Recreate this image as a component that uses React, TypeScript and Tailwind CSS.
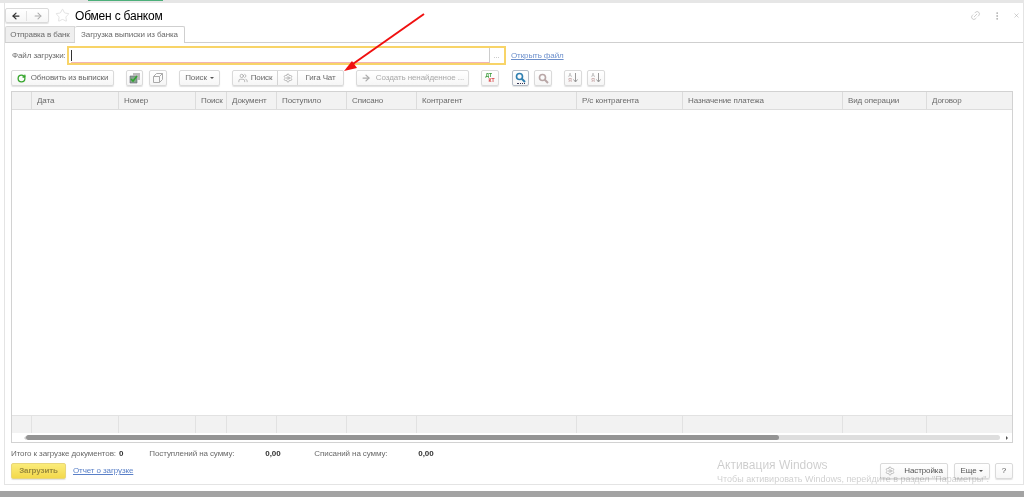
import React from 'react';
import { ArrowLeft, ArrowRight, Link2, MoreVertical, RotateCw, Settings, Star, Users, X } from 'lucide-react';

const columns = ['', 'Дата', 'Номер', 'Поиск', 'Документ', 'Поступило', 'Списано', 'Контрагент', 'Р/с контрагента', 'Назначение платежа', 'Вид операции', 'Договор'];

const tableGrid = 'grid grid-cols-[20px_87px_77px_31px_50px_70px_70px_160px_106px_160px_84px_85px]';

const btn = 'h-4 flex items-center justify-center rounded-[2px] border border-[#dadada] bg-gradient-to-b from-white to-[#f6f6f6] shadow-[0_1px_1px_rgba(0,0,0,0.12)]';

const Caret = () => <span className="ml-[3px] inline-block border-x-[2px] border-t-[2px] border-x-transparent border-t-[#555]" />;

const SortIcon = () => (
    <div className="flex items-center gap-[1px]">
        <div className="flex flex-col text-[5px] leading-[5px] font-bold tracking-normal">
            <span className="text-[#b5b5b5]">А</span>
            <span className="text-[#c9a9a9]">Я</span>
        </div>
        <svg width="5" height="10" viewBox="0 0 5 10">
            <path d="M2.5 0v9M.5 6.5l2 2.5 2-2.5" fill="none" stroke="#999" />
        </svg>
    </div>
);

const Lens = ({ color }: { color: string }) => (
    <svg width="11" height="11" viewBox="0 0 11 11" fill="none" stroke={color}>
        <circle cx="4.5" cy="4.5" r="3" strokeWidth="1.6" />
        <path d="M6.8 6.8 10 10" strokeWidth="2" />
    </svg>
);

export default function App() {
    return (
        <div className="relative flex h-[497px] w-[1024px] flex-col overflow-hidden bg-white font-['Liberation_Sans',Arial,sans-serif] text-[8px] tracking-[-0.1px] whitespace-nowrap text-[#6a6a6a] blur-[0.3px]">
            {/* strip of the window above the form */}
            <div className="h-[3px] shrink-0 bg-[#e6e6e6]">
                <div className="ml-[88px] h-[1px] w-[75px] bg-[#4caf7a]" />
            </div>

            <div className="ml-[4px] flex min-h-0 flex-1 flex-col border-r border-b border-l border-[#e4e4e4]">
                {/* header */}
                <div className="flex h-[24px] shrink-0 items-center pt-[1px]">
                    <div className={`${btn} h-[15px] w-[44px]`}>
                        <div className="flex w-1/2 justify-center border-r border-[#e2e2e2]"><ArrowLeft size={10} strokeWidth={3} color="#333" /></div>
                        <div className="flex w-1/2 justify-center"><ArrowRight size={10} strokeWidth={2.5} color="#aaa" /></div>
                    </div>
                    <Star size={15} strokeWidth={1} color="#d2d2d2" className="ml-[6px]" />
                    <h1 className="ml-[5px] text-[12px] leading-none font-normal tracking-[-0.2px] text-black">Обмен с банком</h1>
                    <div className="ml-auto flex items-center gap-[11px] pr-[3px] text-[#999]">
                        <Link2 size={11} strokeWidth={1} className="-rotate-45" />
                        <MoreVertical size={10} strokeWidth={1.5} />
                        <X size={7} strokeWidth={1.5} />
                    </div>
                </div>

                {/* tabs */}
                <div className="flex h-[16px] shrink-0 items-end border-b border-[#cfcfcf]">
                    <div className="flex h-[16px] w-[70px] items-center justify-center rounded-tl-[2px] border border-b-0 border-[#d8d8d8] bg-[#efefef]">Отправка в банк</div>
                    <div className="-mb-[1px] flex h-[17px] w-[110px] items-center justify-center rounded-t-[2px] border border-b-0 border-l-0 border-[#cfcfcf] bg-white">Загрузка выписки из банка</div>
                </div>

                {/* file */}
                <div className="mt-[3px] flex h-[19px] shrink-0 items-center pl-[7px]">
                    <span className="w-[55px]">Файл загрузки:</span>
                    <div className="flex h-[19px] w-[439px] border-2 border-[#f8d468] pr-[1px] pl-[2px]">
                        <div className="flex flex-1 items-center border-b border-[#f2b4b4]"><span className="h-[11px] w-[1px] bg-[#333]" /></div>
                        <div className="flex w-[14px] items-center justify-center border-l border-[#ccc] text-[#aaa]">...</div>
                    </div>
                    <a className="ml-[5px] text-[#6d90cc] underline">Открыть файл</a>
                </div>

                {/* toolbar */}
                <div className="mt-[5px] flex h-4 shrink-0 items-center pl-[6px]">
                    <div className={`${btn} w-[103px] gap-[5px]`}>
                        <RotateCw size={9} strokeWidth={3.5} color="#35a52b" />
                        <span>Обновить из выписки</span>
                    </div>
                    <div className={`${btn} ml-[12px] w-[17px]`}>
                        <svg width="12" height="12" viewBox="0 0 12 12">
                            <path d="M1 4h7v7H1z" fill="#8aa390" stroke="#667" strokeWidth="0.6" />
                            <path d="M4 1h7v7H8V4H4z" fill="#bbb" />
                            <path d="M2 7l2 2 4-5" fill="none" stroke="#2fa52f" strokeWidth="1.6" />
                        </svg>
                    </div>
                    <div className={`${btn} ml-[6px] w-[18px]`}>
                        <svg width="12" height="12" viewBox="0 0 12 12" fill="none" stroke="#aaa">
                            <path d="M1.5 4.5h6v6h-6zM1.5 4.5l3-3h6v6l-3 3M7.5 4.5l3-3" />
                        </svg>
                    </div>
                    <div className={`${btn} ml-[12px] w-[41px]`}>Поиск<Caret /></div>
                    <div className={`${btn} ml-[12px] w-[112px] !justify-start`}>
                        <div className="flex h-full w-[45px] items-center justify-center gap-[3px] border-r border-[#d4d4d4]"><Users size={10} strokeWidth={1} color="#666" />Поиск</div>
                        <div className="flex h-full w-[20px] items-center justify-center border-r border-[#d4d4d4]"><Settings size={10} strokeWidth={1} color="#666" /></div>
                        <div className="flex-1 text-center">Гига Чат</div>
                    </div>
                    <div className={`${btn} ml-[12px] w-[113px] gap-[5px] text-[#aaa]`}>
                        <ArrowRight size={10} strokeWidth={3} color="#aaa" />
                        <span>Создать ненайденное ...</span>
                    </div>
                    <div className={`${btn} ml-[12px] w-[18px]`}>
                        <div className="flex flex-col text-[5px] leading-[5px] font-bold tracking-normal">
                            <span className="text-[#3a9a3a]">ДТ</span>
                            <span className="pl-[3px] text-[#d84040]">КТ</span>
                        </div>
                    </div>
                    <div className={`${btn} ml-[13px] w-[17px] flex-col !border-[#b4bcc6]`}>
                        <Lens color="#2f7fb0" />
                        <span className="w-[8px] border-t border-dotted border-[#335]" />
                    </div>
                    <div className={`${btn} ml-[5px] w-[18px]`}><Lens color="#b8a6a6" /></div>
                    <div className={`${btn} ml-[12px] w-[18px]`}><SortIcon /></div>
                    <div className={`${btn} ml-[5px] w-[18px]`}><SortIcon /></div>
                </div>

                {/* table */}
                <div className="mt-[5px] mr-[10px] ml-[6px] flex h-[352px] shrink-0 flex-col border border-[#d2d2d2]">
                    <div className={`${tableGrid} h-[18px] shrink-0 border-b border-[#dcdcdc] bg-[#f2f2f2]`}>
                        {columns.map((c, i) => (
                            <div key={i} className="flex items-center border-r border-[#dcdcdc] pl-[5px] last:border-r-0">{c}</div>
                        ))}
                    </div>
                    <div className="flex-1" />
                    <div className={`${tableGrid} h-[18px] shrink-0 border-t border-[#e2e2e2] bg-[#f2f2f2]`}>
                        {columns.map((_, i) => (
                            <div key={i} className="border-r border-[#e2e2e2] last:border-r-0" />
                        ))}
                    </div>
                    <div className="flex h-[9px] shrink-0 items-center px-[4px]">
                        <span className="w-[10px] border-y-[2px] border-r-[2px] border-y-transparent border-r-[#ccc]" />
                        <div className="flex h-[5px] flex-1 rounded-full bg-[#dedede]">
                            <div className="w-[753px] rounded-full bg-[#949494]" />
                        </div>
                        <span className="ml-[6px] border-y-[2px] border-l-[2px] border-y-transparent border-l-[#555]" />
                    </div>
                </div>

                {/* totals */}
                <div className="mt-[5px] flex h-[12px] shrink-0 items-center pl-[6px]">
                    <span className="w-[104px]">Итого к загрузке документов:</span>
                    <b className="ml-[4px] text-[#333]">0</b>
                    <span className="ml-[26px] w-[84px]">Поступлений на сумму:</span>
                    <b className="ml-[32px] w-[15px] text-[#333]">0,00</b>
                    <span className="ml-[34px] w-[72px]">Списаний на сумму:</span>
                    <b className="ml-[32px] text-[#333]">0,00</b>
                </div>

                {/* bottom buttons */}
                <div className="mt-[3px] flex h-4 shrink-0 items-center pr-[10px] pl-[6px]">
                    <div className="flex h-4 w-[55px] items-center justify-center rounded-[2px] border border-[#e8d67a] bg-gradient-to-b from-[#fbec7a] to-[#f3d94a] font-bold text-[#9a8a3c] shadow-[0_1px_1px_rgba(0,0,0,0.12)]">Загрузить</div>
                    <a className="ml-[7px] text-[#5a80c8] underline">Отчет о загрузке</a>
                    <div className={`${btn} ml-auto w-[68px] gap-[9px] text-[#555]`}><Settings size={10} strokeWidth={1.2} color="#888" />Настройка</div>
                    <div className={`${btn} ml-[6px] w-[36px] text-[#555]`}>Еще<Caret /></div>
                    <div className={`${btn} ml-[5px] w-[18px] text-[#555]`}>?</div>
                </div>
            </div>

            <div className="h-[6px] shrink-0 bg-white" />
            <div className="h-[6px] shrink-0 bg-[#a3a3a3]" />

            {/* drawn over the form */}
            <svg className="absolute top-0 left-0" width="1024" height="100" viewBox="0 0 1024 100">
                <path d="M424 14 350 66" stroke="#f01010" strokeWidth="2" fill="none" />
                <path d="M344 71 352 61 357 68z" fill="#f01010" />
            </svg>
            <div className="pointer-events-none absolute top-[458px] left-[717px] tracking-normal text-[#000]/20">
                <div className="text-[12px] leading-[15px]">Активация Windows</div>
                <div className="text-[9px] leading-[12px]">Чтобы активировать Windows, перейдите в раздел "Параметры".</div>
            </div>
        </div>
    );
}
